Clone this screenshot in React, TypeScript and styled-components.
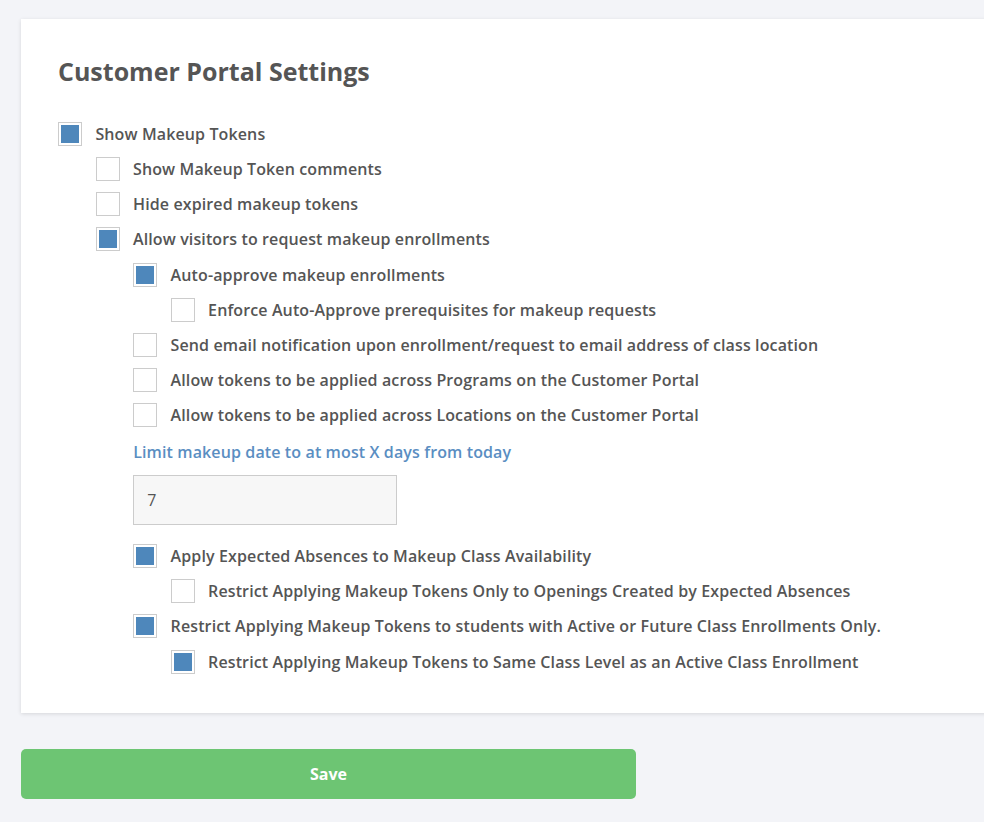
import React from "react";
import styled, { createGlobalStyle } from "styled-components";

const Global = createGlobalStyle`
  html, body { margin: 0; padding: 0; background: #f3f4f8; overflow: hidden; }
  body { font-family: "Open Sans", "Liberation Sans", sans-serif; color: #555; }
`;

const Page = styled.div`
  padding: 19px 0 0 21px;
  display: flex;
  flex-direction: column;
  align-items: flex-start;
`;

const Card = styled.div`
  width: 1000px;
  background: #fff;
  box-shadow: 0 1px 4px rgba(0, 0, 0, 0.12);
  padding: 37px 37px 28px 37px;
  box-sizing: border-box;
`;

const Title = styled.h2`
  margin: 0 0 36px 0;
  font-size: 25px;
  line-height: 30px;
  font-weight: 700;
  color: #555;
`;

const List = styled.div<{ $indent: number }>`
  display: flex;
  flex-direction: column;
  padding-left: ${(p) => p.$indent}px;
`;

const Row = styled.label`
  display: flex;
  align-items: center;
  gap: 13.4px;
  height: 24px;
  margin-bottom: 11.13px;
  cursor: pointer;
`;

const Box = styled.span<{ $checked: boolean }>`
  width: 24px;
  height: 24px;
  box-sizing: border-box;
  border: 1px solid #cccccc;
  background: #fff;
  padding: 2px;
  flex-shrink: 0;
  display: flex;
  &::after {
    content: "";
    flex: 1;
    background: ${(p) => (p.$checked ? "#4e87bb" : "transparent")};
  }
`;

const Label = styled.span`
  font-size: 16px;
  letter-spacing: 0.12px;
  font-weight: 600;
  color: #555;
  white-space: nowrap;
`;

const FieldLabel = styled.div`
  font-size: 16px;
  letter-spacing: 0.12px;
  font-weight: 600;
  color: #5a8ec2;
  margin: 3px 0 12px 0;
  line-height: 22px;
`;

const NumInput = styled.div`
  width: 264px;
  height: 50px;
  box-sizing: border-box;
  border: 1px solid #cccccc;
  background: #f7f7f7;
  display: flex;
  align-items: center;
  padding-left: 13px;
  font-size: 16px;
  color: #555;
  margin-bottom: 19px;
`;

const SaveButton = styled.button`
  margin-top: 36px;
  width: 615px;
  height: 50px;
  border: none;
  border-radius: 5px;
  background: #6dc573;
  color: #fff;
  font-family: "Open Sans", "Liberation Sans", sans-serif;
  font-size: 16px;
  font-weight: 700;
  cursor: pointer;
`;

type Item = { label: string; checked: boolean; children?: Item[] };

const Check = ({ label, checked }: { label: string; checked: boolean }) => (
  <Row>
    <Box $checked={checked} />
    <Label>{label}</Label>
  </Row>
);

const Tree = ({ items, indent }: { items: Item[]; indent: number }) => (
  <List $indent={indent}>
    {items.map((it) => (
      <React.Fragment key={it.label}>
        <Check label={it.label} checked={it.checked} />
        {it.children && <Tree items={it.children} indent={37.5} />}
      </React.Fragment>
    ))}
  </List>
);

export default function App() {
  return (
    <Page>
      <Global />
      <Card>
        <Title>Customer Portal Settings</Title>
        <Check label="Show Makeup Tokens" checked />
        <List $indent={37.6}>
          <Check label="Show Makeup Token comments" checked={false} />
          <Check label="Hide expired makeup tokens" checked={false} />
          <Check label="Allow visitors to request makeup enrollments" checked />
          <List $indent={37.6}>
            <Tree
              indent={0}
              items={[
                {
                  label: "Auto-approve makeup enrollments",
                  checked: true,
                  children: [
                    { label: "Enforce Auto-Approve prerequisites for makeup requests", checked: false },
                  ],
                },
                {
                  label: "Send email notification upon enrollment/request to email address of class location",
                  checked: false,
                },
                { label: "Allow tokens to be applied across Programs on the Customer Portal", checked: false },
                { label: "Allow tokens to be applied across Locations on the Customer Portal", checked: false },
              ]}
            />
            <FieldLabel>Limit makeup date to at most X days from today</FieldLabel>
            <NumInput>7</NumInput>
            <Tree
              indent={0}
              items={[
                {
                  label: "Apply Expected Absences to Makeup Class Availability",
                  checked: true,
                  children: [
                    {
                      label: "Restrict Applying Makeup Tokens Only to Openings Created by Expected Absences",
                      checked: false,
                    },
                  ],
                },
                {
                  label: "Restrict Applying Makeup Tokens to students with Active or Future Class Enrollments Only.",
                  checked: true,
                  children: [
                    {
                      label: "Restrict Applying Makeup Tokens to Same Class Level as an Active Class Enrollment",
                      checked: true,
                    },
                  ],
                },
              ]}
            />
          </List>
        </List>
      </Card>
      <SaveButton>Save</SaveButton>
    </Page>
  );
}
